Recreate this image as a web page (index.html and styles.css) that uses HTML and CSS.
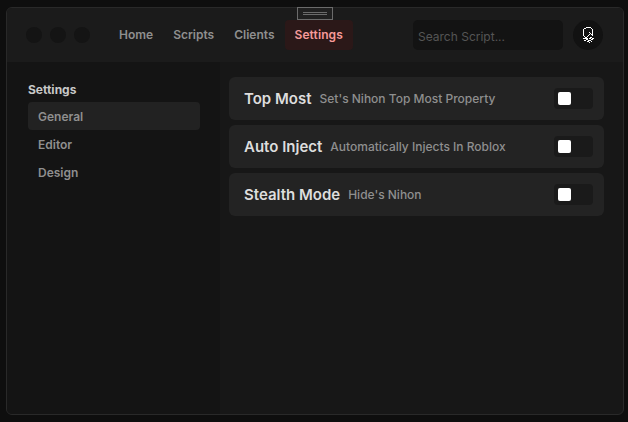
FILE: index.html
```html
<!DOCTYPE html>
<html lang="en">
<head>
<meta charset="utf-8">
<title>Nihon</title>
<link rel="stylesheet" href="styles.css">
</head>
<body>
<div class="window">
  <header class="topbar">
    <div class="dots"><i></i><i></i><i></i></div>
    <nav class="nav">
      <a>Home</a><a>Scripts</a><a>Clients</a><a class="active">Settings</a>
    </nav>
    <div class="search">Search Script...</div>
    <div class="avatar">
      <svg width="12" height="16" viewBox="0 0 12 16" fill="none" stroke="#fff" shape-rendering="crispEdges"><path d="M4 .5h5M2 1.5h2M9 1.5h1M1.500 2v7M10.500 2v5M2 9.500h1M3 10.500h2M5 9.500h1M7 5.500h1M8 6.500h1M7 7.500h1M9 7.500h2M10 8.500h1M6 8.500h1M8 10.500h1M1 11.500h5M9 10.500h1M7 11.500h2M10 11.500h2M4 12.500h2M9 12.500h2M2 13.500h2M6 13.500h3M5 14.500h2M9 14.500h1M7 15.500h1"/></svg>
    </div>
  </header>
  <div class="body">
    <aside class="sidebar">
      <h2>Settings</h2>
      <a class="selected">General</a><a>Editor</a><a>Design</a>
    </aside>
    <main class="content">
      <section class="row"><b>Top Most</b><span class="desc">Set's Nihon Top Most Property</span><span class="toggle"></span></section>
      <section class="row"><b>Auto Inject</b><span class="desc">Automatically Injects In Roblox</span><span class="toggle"></span></section>
      <section class="row"><b>Stealth Mode</b><span class="desc">Hide's Nihon</span><span class="toggle"></span></section>
    </main>
  </div>
  <div class="grip"><span></span></div>
</div>
</body>
</html>
```
FILE: styles.css
```css
* { box-sizing: border-box; }
body {
  margin: 0;
  height: 422px;
  padding: 7px 4px 7px 6px;
  overflow: hidden;
  background: #0e0e0e;
  font-family: Inter, sans-serif;
  font-size: 12px;
  font-weight: 600;
  color: #8f8f8f;
}
.window {
  position: relative;
  height: 408px;
  display: flex;
  flex-direction: column;
  border: 1px solid #292929;
  border-radius: 6px;
  background: #171717;
}
.grip {
  position: absolute;
  left: 290px;
  top: -1px;
  width: 36px;
  height: 13px;
  padding: 4px 5px;
  border: 1px solid #6b6b6b;
  background: #202020;
}
.grip span {
  display: block;
  height: 3px;
  border: solid #6b6b6b;
  border-width: 1px 0;
}
.topbar {
  height: 54px;
  flex: none;
  display: flex;
  align-items: center;
  padding-left: 19px;
  border-radius: 5px 5px 0 0;
  background: #1b1b1b;
}
.dots { display: flex; gap: 8px; }
.dots i { width: 16px; height: 16px; border-radius: 50%; background: #141414; }
.nav { display: flex; width: 244px; margin-left: 19px; }
.nav a {
  height: 30px;
  line-height: 30px;
  padding: 0 10px;
  border-radius: 4px;
}
.nav .active {
  flex: 1;
  color: #f69a9a;
  background: #2b1818;
  letter-spacing: 0.1px;
}
.search {
  width: 150px;
  height: 30px;
  margin-left: 60px;
  padding-left: 5px;
  line-height: 34px;
  border-radius: 5px;
  background: #131313;
  color: #555;
  font-weight: 400;
}
.avatar {
  width: 30px;
  height: 30px;
  margin-left: 10px;
  display: flex;
  align-items: center;
  justify-content: center;
  border-radius: 50%;
  background: #121212;
}
.body { flex: 1; display: flex; }
.sidebar {
  width: 213px;
  padding: 20px 20px 0 21px;
  border-radius: 0 0 0 5px;
  background: #141414;
}
.sidebar h2 {
  margin: 0 0 4px;
  line-height: 16px;
  font-size: 12px;
  font-weight: 700;
  color: #c8c8c8;
}
.sidebar a {
  display: block;
  height: 28px;
  padding-left: 10px;
  line-height: 29px;
  border-radius: 4px;
}
.sidebar .selected { background: #222; }
.content {
  flex: 1;
  display: flex;
  flex-direction: column;
  gap: 5px;
  padding: 15px 19px 0 9px;
}
.row {
  height: 43px;
  display: flex;
  align-items: center;
  padding: 0 11px 0 15px;
  border-radius: 6px;
  background: #232323;
}
.row b { font-size: 15px; font-weight: 600; color: #ddd; }
.desc { margin-left: 8px; font-weight: 500; }
.toggle {
  width: 39px;
  height: 21px;
  margin-left: auto;
  padding: 4px;
  border-radius: 4px;
  background: #1a1a1a;
}
.toggle::before {
  content: "";
  display: block;
  width: 13px;
  height: 13px;
  border-radius: 2px;
  background: #fff;
}
```
